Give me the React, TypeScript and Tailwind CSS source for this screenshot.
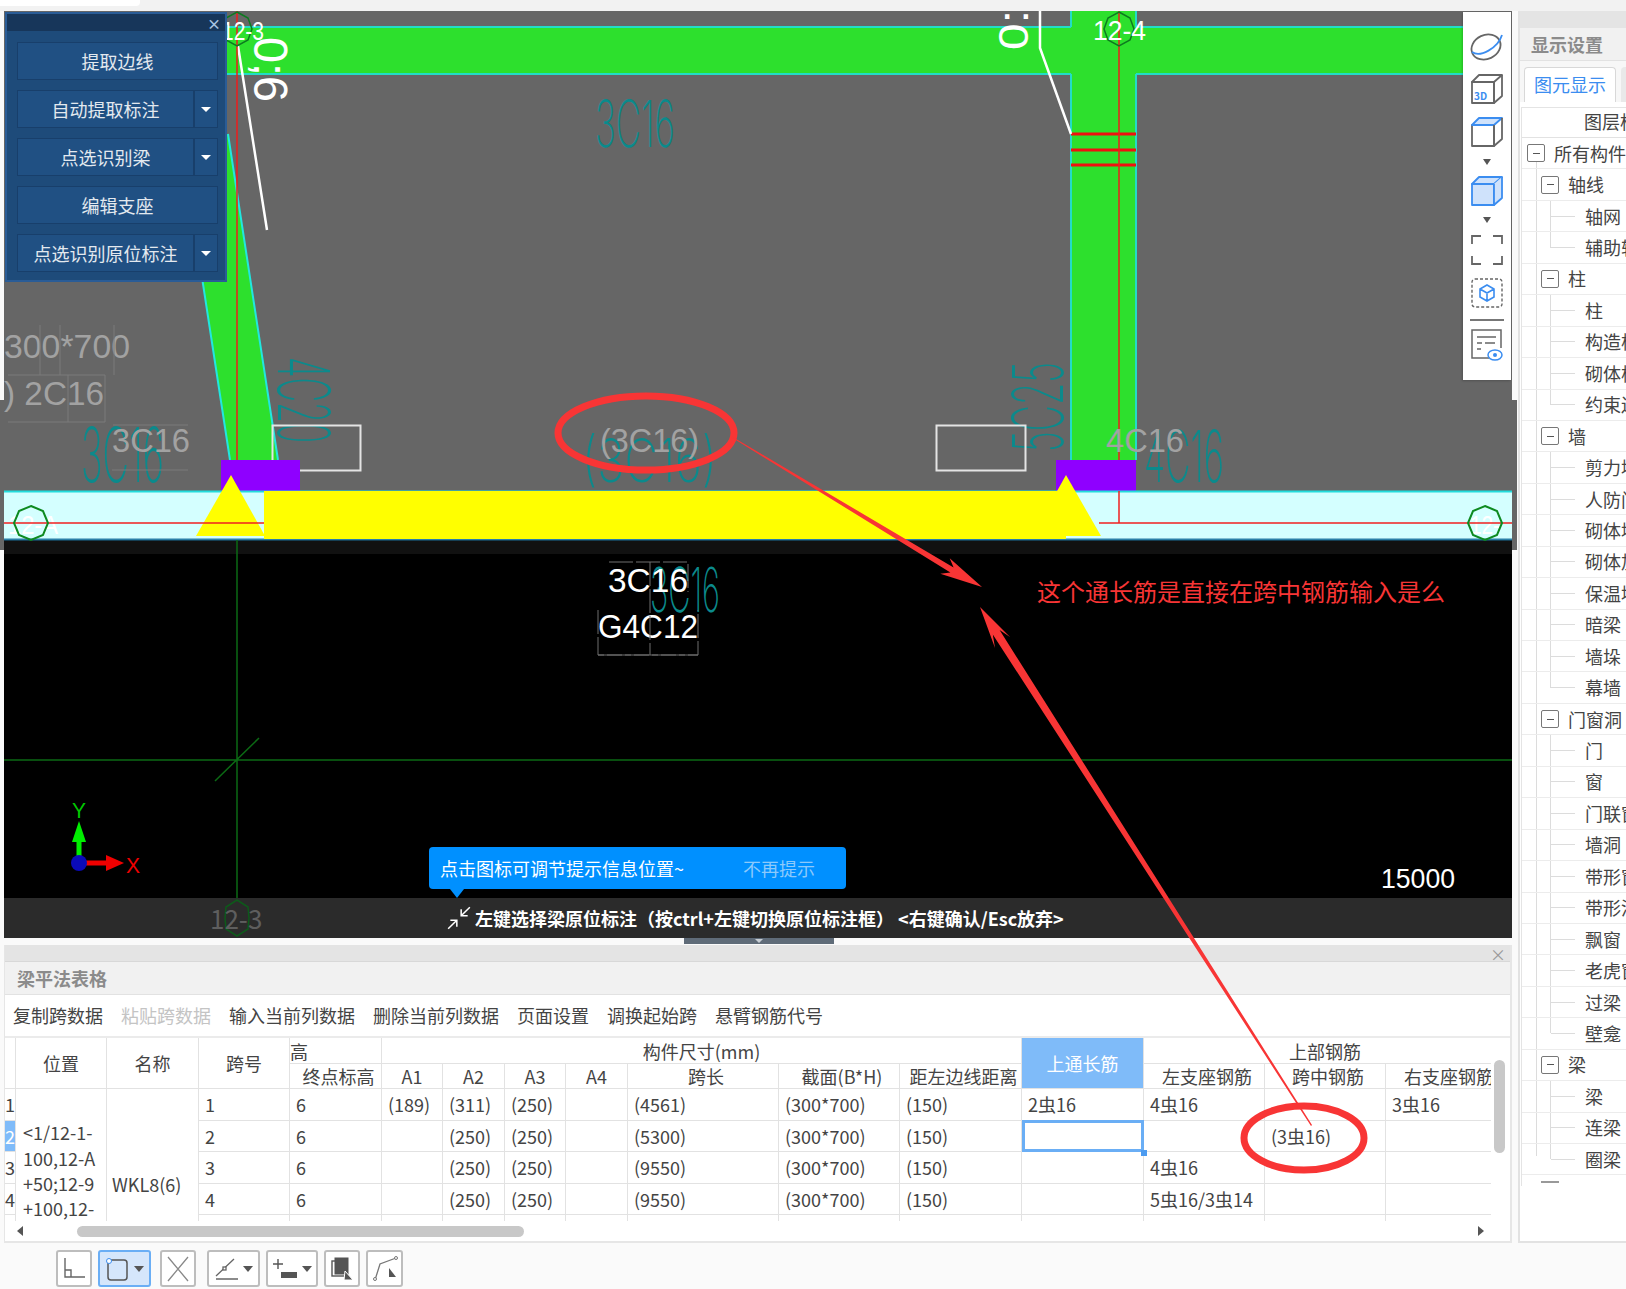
import React from "react";

const sideButtons = [
  { label: "提取边线", menu: false },
  { label: "自动提取标注", menu: true },
  { label: "点选识别梁", menu: true },
  { label: "编辑支座", menu: false },
  { label: "点选识别原位标注", menu: true },
];

const tools = ["复制跨数据", "粘贴跨数据", "输入当前列数据", "删除当前列数据", "页面设置", "调换起始跨", "悬臂钢筋代号"];

const spans = [
  ["1", "6", "(189)", "(311)", "(250)", "", "(4561)", "(300*700)", "(150)", "2虫16", "4虫16", "", "3虫16"],
  ["2", "6", "", "(250)", "(250)", "", "(5300)", "(300*700)", "(150)", "", "", "(3虫16)", ""],
  ["3", "6", "", "(250)", "(250)", "", "(9550)", "(300*700)", "(150)", "", "4虫16", "", ""],
  ["4", "6", "", "(250)", "(250)", "", "(9550)", "(300*700)", "(150)", "", "5虫16/3虫14", "", ""],
  ["", "", "", "", "", "", "", "", "", "", "″", "″", ""],
];

const tree: [number, string][] = [
  [0, "所有构件"], [1, "轴线"], [2, "轴网"], [2, "辅助轴线"], [1, "柱"], [2, "柱"], [2, "构造柱"], [2, "砌体柱"],
  [2, "约束边缘"], [1, "墙"], [2, "剪力墙"], [2, "人防门框"], [2, "砌体墙"], [2, "砌体加筋"], [2, "保温墙"], [2, "暗梁"],
  [2, "墙垛"], [2, "幕墙"], [1, "门窗洞"], [2, "门"], [2, "窗"], [2, "门联窗"], [2, "墙洞"], [2, "带形窗"], [2, "带形洞"],
  [2, "飘窗"], [2, "老虎窗"], [2, "过梁"], [2, "壁龛"], [1, "梁"], [2, "梁"], [2, "连梁"], [2, "圈梁"],
];

const Caret = () => <div className="h-0 w-0 border-x-[5px] border-t-[6px] border-x-transparent border-t-[#555]" />;

const Thin = ({ x, y, size, len, fill = "#0b8a8c", children }: any) => (
  <text x={x} y={y} fontSize={size} textLength={len} lengthAdjust="spacingAndGlyphs" fill={fill} fontWeight={200} fontFamily="Inter, sans-serif">
    {children}
  </text>
);

const Label = ({ x, y, size, len, fill = "#a2a2a2", children }: any) => (
  <text x={x} y={y} fontSize={size} textLength={len} lengthAdjust="spacingAndGlyphs" fill={fill} fontFamily="Liberation Sans, sans-serif">
    {children}
  </text>
);

const Drawing = () => (
  <svg className="block" width="1508" height="887" viewBox="4 11 1508 887">
    <rect x="4" y="11" width="1508" height="528" fill="#666666" />
    <rect x="4" y="539" width="1508" height="359" fill="#000000" />
    <rect x="4" y="541" width="1508" height="13" fill="#111111" />

    {/* beams and columns */}
    <rect x="220" y="27" width="1245" height="47" fill="#2de02d" />
    <path d="M220 27H1071M1136 27H1465M220 74H1071M1136 74H1465" stroke="#22dcc8" strokeWidth="2" />
    <rect x="1071" y="11" width="65" height="450" fill="#2de02d" />
    <path d="M1071 11V27M1136 11V27M1071 74V460M1136 74V460" stroke="#22dcc8" strokeWidth="2" />
    <polygon points="180,134 228,134 278,460 230,460" fill="#2de02d" />
    <path d="M180 134L230 460M228 134L278 460" stroke="#22e6e0" strokeWidth="2" />
    <path d="M1071 134H1136M1071 150H1136M1071 165H1136" stroke="#f01010" strokeWidth="3" />

    <Thin x="595" y="147" size="65" len="80">3C16</Thin>
    <g transform="translate(278 357) rotate(90)"><Thin x="0" y="0" size="72" len="86">4C20</Thin></g>
    <g transform="translate(1063 452) rotate(-90)"><Thin x="0" y="0" size="70" len="90">5C25</Thin></g>
    <Thin x="81" y="482" size="76" len="83">3C16</Thin>
    <Thin x="582" y="482" size="60" len="135">(3C16)</Thin>
    <Thin x="1144" y="482" size="72" len="80">4C16</Thin>

    <g transform="translate(254 37) rotate(90)"><Label x="0" y="0" size="48" len="65" fill="#ffffff">0;6</Label></g>
    <g transform="translate(1028 50) rotate(-90)"><Label x="0" y="0" size="42" len="40" fill="#ffffff">0:</Label></g>
    <path d="M238 46L267 230M1040 11V48L1071 134" stroke="#ffffff" strokeWidth="2.5" fill="none" />

    <path d="M237 11V460M1119 11V460M1119 491V523" stroke="#ee1c1c" strokeWidth="1.5" />

    <Label x="4" y="358" size="34" len="126">300*700</Label>
    <Label x="4" y="405" size="34" len="100">) 2C16</Label>
    <Label x="112" y="452" size="34" len="78">3C16</Label>
    <Label x="600" y="452" size="34" len="99">(3C16)</Label>
    <Label x="1106" y="452" size="34" len="78">4C16</Label>
    <path d="M40 325V375M60 325V375M114 325V375M8 375H105V422H8M68 375V422M113 425H188M112 470H188" stroke="#7a7a7a" strokeWidth="1" fill="none" />

    <rect x="272.5" y="425.5" width="88" height="45" fill="none" stroke="#e4e4e4" strokeWidth="2" />
    <rect x="936.5" y="425.5" width="89" height="45" fill="none" stroke="#e4e4e4" strokeWidth="2" />

    {/* beam being edited */}
    <rect x="221" y="460" width="79" height="31" fill="#8f00ff" />
    <rect x="1056" y="460" width="80" height="31" fill="#8f00ff" />
    <rect x="4" y="491" width="1508" height="48" fill="#d4ffff" />
    <path d="M4 491.5H1512" stroke="#22dcdc" strokeWidth="2" />
    <path d="M4 539.5H1512" stroke="#2a7fa8" strokeWidth="2" />
    <Label x="8" y="534" size="26" len="50" fill="#ffffff">12-A</Label>
    <Label x="1470" y="534" size="26" len="30" fill="#ffffff">12-</Label>
    <rect x="264" y="491" width="802" height="48" fill="#ffff00" />
    <polygon points="231,475 196,536 265,536" fill="#ffff00" />
    <polygon points="1066,475 1032,536 1101,536" fill="#ffff00" />
    <path d="M4 523H264M1099 523H1512M1119 491V523" stroke="#f02020" strokeWidth="1.5" />

    <polygon points="31,506 43,511 48,523 43,535 31,540 19,535 14,523 19,511" fill="none" stroke="#0e8a20" strokeWidth="2" />
    <polygon points="1485,506 1497,511 1502,523 1497,535 1485,540 1473,535 1468,523 1473,511" fill="none" stroke="#0e8a20" strokeWidth="2" />
    <polygon points="1119,12 1130,18 1134,29 1130,40 1119,46 1108,40 1104,29 1108,18" fill="none" stroke="#0d7a20" strokeWidth="1.5" />
    <polygon points="237,12 248,18 252,29 248,40 237,46 226,40 222,29 226,18" fill="none" stroke="#0d7a20" strokeWidth="1.5" />
    <Label x="1093" y="40" size="28" len="53" fill="#ffffff">12-4</Label>
    <Label x="222" y="40" size="26" len="42" fill="#ffffff">12-3</Label>

    {/* black area */}
    <path d="M237 540V898M4 760H1512M215 781L259 738" stroke="#0b6a14" strokeWidth="1.5" />
    <Thin x="650" y="612" size="62" len="70">3C16</Thin>
    <Label x="608" y="592" size="34" len="80" fill="#ffffff">3C16</Label>
    <Label x="598" y="638" size="34" len="100" fill="#ffffff">G4C12</Label>
    <path d="M609 562H688V592M650 562V655M598 610V655H698V610M598 655H698" stroke="#6e6e6e" strokeWidth="1" fill="none" strokeDasharray="24 3" />
    <Label x="1381" y="888" size="28" len="74" fill="#ffffff">15000</Label>

    {/* coordinate axes */}
    <path d="M79 862V840" stroke="#00ee00" strokeWidth="5" />
    <polygon points="79,821 72,842 86,842" fill="#00ee00" />
    <path d="M80 863H108" stroke="#f00000" strokeWidth="5" />
    <polygon points="124,863 106,855 106,871" fill="#f00000" />
    <ellipse cx="79" cy="863" rx="8" ry="8" fill="#0a0ab8" />
    <Label x="72" y="818" size="22" len="14" fill="#00c800">Y</Label>
    <Label x="126" y="873" size="22" len="14" fill="#f00000">X</Label>
  </svg>
);

const Box = ({ fill = "none", top = "#666", stroke = "#666" }: any) => (
  <svg width="32" height="30" viewBox="0 0 32 30" fill="none" strokeLinejoin="round">
    <path d="M1 8V29H23V8Z" fill={fill} stroke={stroke} strokeWidth="1.8" />
    <path d="M1 8L8 1H31L23 8Z" fill={top === "#666" ? "none" : "#cfe2fb"} stroke={top} strokeWidth="1.8" />
    <path d="M23 8V29L31 22V1" fill={fill} stroke={stroke} strokeWidth="1.8" />
  </svg>
);

const ViewBar = () => (
  <div className="absolute left-[1459px] top-[1px] flex h-[368px] w-[48px] flex-col items-center bg-white pt-[20px] shadow-[-1px_1px_2px_#0003]">
    <svg width="34" height="30" viewBox="0 0 34 30" fill="none">
      <ellipse cx="16" cy="15" rx="15" ry="12" stroke="#666" strokeWidth="1.8" transform="rotate(-25 16 15)" />
      <path d="M2 20C10 26 28 16 32 3" stroke="#3b8df0" strokeWidth="1.8" />
    </svg>
    <div className="relative mt-[12px]">
      <Box />
      <span className="absolute bottom-[2px] left-[3px] text-[10px] leading-[12px] font-bold text-[#3b8df0]">3D</span>
    </div>
    <div className="mt-[13px]"><Box top="#3b8df0" /></div>
    <div className="mt-[12px] h-0 w-0 border-x-[4px] border-t-[6px] border-x-transparent border-t-[#555]" />
    <div className="mt-[11px]"><Box fill="#cfe2fb" top="#3b8df0" stroke="#3b8df0" /></div>
    <div className="mt-[11px] h-0 w-0 border-x-[4px] border-t-[6px] border-x-transparent border-t-[#555]" />
    <svg className="mt-[12px]" width="32" height="30" viewBox="0 0 32 30" fill="none" stroke="#666" strokeWidth="1.8">
      <path d="M1 9V1H10M22 1H31V9M31 21V29H22M10 29H1V21" />
    </svg>
    <svg className="mt-[13px]" width="32" height="30" viewBox="0 0 32 30" fill="none">
      <rect x="1" y="1" width="30" height="28" rx="3" stroke="#666" strokeWidth="1.4" strokeDasharray="3 2" />
      <path d="M16 7L23 11V19L16 23L9 19V11ZM9 11L16 15L23 11M16 15V23" stroke="#3b8df0" strokeWidth="1.6" />
    </svg>
    <div className="mt-[11px] h-[2px] w-[34px] bg-[#777]" />
    <svg className="mt-[8px]" width="32" height="32" viewBox="0 0 32 32" fill="none">
      <path d="M18 29H1V1H30V19" stroke="#666" strokeWidth="1.5" />
      <path d="M6 8H25M6 14H11M14 14H24M6 20H10" stroke="#666" strokeWidth="1.4" />
      <ellipse cx="24" cy="26" rx="7" ry="5" stroke="#3b8df0" strokeWidth="1.5" />
      <circle cx="24" cy="26" r="2" fill="#3b8df0" />
    </svg>
  </div>
);

const SidePanel = () => (
  <div className="absolute left-[1px] top-[1px] h-[270px] w-[222px] border-2 border-[#2a5c96] bg-[#1e4b7a]">
    <div className="flex h-[17px] items-center justify-end bg-[#17365a] pr-[4px] text-[14px] leading-none font-bold text-[#a9c4e2]">×</div>
    <div className="flex flex-col gap-[10px] pl-[10px] pr-[7px] pt-[11px]">
      {sideButtons.map((b) => (
        <div key={b.label} className="flex h-[38px] border border-[#183f6b] bg-[#205083] text-[18px] leading-[36px] text-[#e3e9ef]">
          <div className="flex-1 text-center">{b.label}</div>
          {b.menu && (
            <div className="flex w-[24px] items-center justify-center border-l-2 border-[#183f6b]">
              <div className="h-0 w-0 border-x-[5px] border-t-[5px] border-x-transparent border-t-white" />
            </div>
          )}
        </div>
      ))}
    </div>
  </div>
);

const Canvas = () => (
  <div className="relative h-[927px] w-[1508px] overflow-hidden">
    <Drawing />
    <SidePanel />
    <ViewBar />
    <div className="absolute left-[425px] top-[836px] flex h-[42px] w-[417px] items-center rounded-[4px] bg-[#0090ff] pl-[11px] text-[18px] text-white">
      <span className="w-[303px] whitespace-nowrap">点击图标可调节提示信息位置~</span>
      <span className="text-[#8cc9fb]">不再提示</span>
      <div className="absolute left-[21px] top-[42px] h-0 w-0 border-x-[7px] border-t-[9px] border-x-transparent border-t-[#0090ff]" />
    </div>
    <div className="flex h-[40px] items-center bg-[#2b2b2b] pl-[442px] text-[18px] font-bold whitespace-nowrap text-white">
      <svg className="absolute left-[220px] top-[888px]" width="26" height="38" viewBox="0 0 26 38" fill="none" stroke="#0d5a1a" strokeWidth="1.5">
        <polygon points="13,1 24,8 25,19 24,30 13,37 2,30 1,19 2,8" />
      </svg>
      <div className="absolute left-[206px] top-[887px] text-[26px] font-normal text-[#5e5e5e]">12-3</div>
      <svg width="26" height="26" viewBox="0 0 24 24" fill="none" stroke="#ffffff" strokeWidth="1.4">
        <path d="M22 2L14 10M14 4V10H20M2 22L10 14M4 14H10V20" />
      </svg>
      <span className="ml-[3px]">左键选择梁原位标注（按ctrl+左键切换原位标注框） &lt;右键确认/Esc放弃&gt;</span>
    </div>
  </div>
);

const Cell = ({ className = "", children }: any) => (
  <div className={`flex items-center overflow-hidden whitespace-nowrap border-r border-b border-[#e2e2e2] ${className}`}>{children}</div>
);

const BeamTable = () => (
  <div className="relative h-[183px] w-[1486px] overflow-hidden text-[18px] leading-none text-[#444]">
    <div className="grid grid-cols-[11px_91px_92px_91px_92px_61px_62px_61px_62px_151px_121px_122px_122px_121px_121px_121px] grid-rows-[26px_25px_31.5px_31.5px_31.5px_31.5px_31px]">
      <Cell className="row-span-2" />
      <Cell className="row-span-2 justify-center">位置</Cell>
      <Cell className="row-span-2 justify-center">名称</Cell>
      <Cell className="row-span-2 justify-center">跨号</Cell>
      <Cell>高</Cell>
      <Cell className="col-span-7 justify-center">构件尺寸(mm)</Cell>
      <Cell className="row-span-2 justify-center bg-[#7fbbf9] text-white">上通长筋</Cell>
      <Cell className="col-span-3 justify-center">上部钢筋</Cell>
      {["终点标高", "A1", "A2", "A3", "A4", "跨长", "截面(B*H)", "距左边线距离", "左支座钢筋", "跨中钢筋", "右支座钢筋"].map((h) => (
        <Cell key={h} className={h.startsWith("A") ? "justify-center" : "justify-center pl-[6px]"}>{h}</Cell>
      ))}
      {spans.map((row, i) => (
        <React.Fragment key={i}>
          <Cell className={i === 1 ? "bg-[#7fbbf9] text-white" : ""}>{i < 4 ? i + 1 : ""}</Cell>
          {i === 0 && (
            <>
              <Cell className="row-span-5 pl-[7px] pt-[8px] leading-[25.3px] whitespace-normal">
                <div>&lt;1/12-1-<br />100,12-A<br />+50;12-9<br />+100,12-</div>
              </Cell>
              <Cell className="row-span-5 pl-[5px] pt-[34px]">WKL8(6)</Cell>
            </>
          )}
          {row.map((v, j) => (
            <Cell key={j} className="pl-[6px]">{v}</Cell>
          ))}
        </React.Fragment>
      ))}
    </div>
    <div className="absolute left-[1017px] top-[82px] h-[32px] w-[122px] border-[3px] border-[#6aaef5]" />
    <div className="absolute left-[1136px] top-[112px] h-[6px] w-[6px] bg-[#4c9bf0]" />
  </div>
);

const BottomPanel = () => (
  <div className="mt-[7px] h-[298px] w-[1508px] border-b-2 border-l border-r-2 border-[#e6e6e6] bg-white">
    <div className="relative h-[17px] border-b border-[#d8d8d8] bg-[#e4e4e4]">
      <span className="absolute right-[4px] top-0 text-[16px] leading-[18px] text-[#999]">×</span>
    </div>
    <div className="h-[33px] border-b border-[#e2e2e2] bg-[#f1f1f1] pl-[12px] text-[18px] leading-[32px] font-bold text-[#8b8b8b]">梁平法表格</div>
    <div className="flex h-[43px] items-center gap-[18px] border-b-2 border-[#ebebeb] pl-[8px] text-[18px] text-[#444]">
      {tools.map((t) => (
        <span key={t} className={t === "粘贴跨数据" ? "text-[#c4c4c4]" : ""}>{t}</span>
      ))}
    </div>
    <BeamTable />
    <div className="relative flex h-[20px] items-center">
      <div className="absolute left-[12px] h-0 w-0 border-y-[5px] border-r-[6px] border-y-transparent border-r-[#555]" />
      <div className="absolute left-[72px] h-[11px] w-[447px] rounded-full bg-[#c8c8c8]" />
      <div className="absolute left-[1473px] h-0 w-0 border-y-[5px] border-l-[6px] border-y-transparent border-l-[#555]" />
    </div>
    <div className="absolute left-[1494px] top-[1060px] h-[93px] w-[11px] rounded-full bg-[#c8c8c8]" />
  </div>
);

const TreeRow = ({ level, name, last }: { level: number; name: string; last: boolean }) => (
  <div className="relative flex h-[31.45px] items-center border-b border-[#ececec] text-[18px] whitespace-nowrap text-[#444]">
    {level === 2 ? (
      <>
        <div className={`absolute left-[28px] top-0 w-px bg-[#dcdcdc] ${last ? "h-1/2" : "h-full"}`} />
        <div className="ml-[29px] mr-[10px] h-px w-[24px] shrink-0 bg-[#dcdcdc]" />
      </>
    ) : (
      <div className={`relative mr-[9px] flex h-[18px] w-[18px] shrink-0 items-center justify-center rounded-[2px] border border-[#777] bg-white ${level === 1 ? "ml-[19px]" : "ml-[5px]"}`}>
        <div className="h-px w-[7px] bg-[#555]" />
      </div>
    )}
    {name}
  </div>
);

const DisplayPanel = () => (
  <div className="ml-[6px] h-[1232px] w-[108px] shrink-0 overflow-hidden border-b-2 border-l-2 border-[#e2e2e2] bg-white">
    <div className="h-[17px] bg-[#e4e4e4]" />
    <div className="h-[33px] border-b border-[#e2e2e2] bg-[#f1f1f1] pl-[11px] text-[18px] leading-[32px] font-bold whitespace-nowrap text-[#8b8b8b]">显示设置</div>
    <div className="flex h-[41px] items-end gap-[5px] bg-[#f7f7f7] pl-[4px]">
      <div className="h-[35px] w-[92px] shrink-0 rounded-t-[4px] border border-b-0 border-[#d8d8d8] bg-white text-center text-[18px] leading-[33px] text-[#3b8df0]">图元显示</div>
      <div className="h-[35px] w-[20px] shrink-0 rounded-t-[4px] bg-[#e9e9e9]" />
    </div>
    <div className="relative ml-[1px] mt-[5px] h-[1079px] w-[200px] border-l border-t border-[#e4e4e4]">
      <div className="h-[30px] border-b border-[#e2e2e2] pl-[62px] text-[18px] leading-[26px] whitespace-nowrap text-[#444]">图层构件</div>
      <div className="absolute left-[14px] top-[48px] h-[1000px] w-px bg-[#dcdcdc]" />
      {tree.map(([level, name], i) => (
        <TreeRow key={i} level={level} name={name} last={tree[i + 1]?.[0] !== 2} />
      ))}
      <div className="ml-[19px] mt-[6px] h-[2px] w-[18px] bg-[#999]" />
    </div>
  </div>
);

const ToolBtn = ({ active = false, className = "", children }: any) => (
  <div className={`flex h-[37px] items-center justify-center gap-[5px] rounded-[3px] border-2 ${active ? "border-[#6aaef5] bg-[#d5e6fb]" : "border-[#bdbdbd] bg-white"} ${className}`}>{children}</div>
);

const BottomTools = () => (
  <div className="flex h-[46px] items-start bg-[#fafafa] pl-[52px] pt-[7px]">
    <ToolBtn className="w-[36px]">
      <svg width="24" height="24" viewBox="0 0 24 24" fill="none" stroke="#666" strokeWidth="1.4"><path d="M3 1V20H23M3 13H9V20" /></svg>
    </ToolBtn>
    <ToolBtn active className="ml-[6px] w-[53px]">
      <svg width="24" height="26" viewBox="0 0 24 26" fill="none"><rect x="3" y="4" width="19" height="20" rx="3" stroke="#555" strokeWidth="1.5" /><circle cx="4" cy="5" r="2.5" fill="#fff" stroke="#3b8df0" /></svg>
      <Caret />
    </ToolBtn>
    <ToolBtn className="ml-[9px] w-[36px]">
      <svg width="24" height="26" viewBox="0 0 24 26" fill="none" stroke="#888" strokeWidth="1.3"><path d="M2 1L22 25M22 1L2 25" /></svg>
    </ToolBtn>
    <ToolBtn className="ml-[11px] w-[53px]">
      <svg width="24" height="24" viewBox="0 0 24 24" fill="none" stroke="#666" strokeWidth="1.3"><path d="M2 19L20 2M2 22H24" /><rect x="9" y="10" width="3" height="3" fill="#fff" /></svg>
      <Caret />
    </ToolBtn>
    <ToolBtn className="ml-[6px] w-[52px]">
      <svg width="24" height="24" viewBox="0 0 24 24" fill="none"><path d="M0 7H10M5 2V12" stroke="#555" strokeWidth="1.4" /><rect x="8" y="15" width="16" height="6" fill="#555" /></svg>
      <Caret />
    </ToolBtn>
    <ToolBtn className="ml-[6px] w-[36px]">
      <svg width="24" height="26" viewBox="0 0 24 26" fill="none"><rect x="2" y="5" width="13" height="15" stroke="#555" strokeWidth="1.4" /><rect x="5" y="2" width="13" height="16" fill="#555" stroke="#555" /><path d="M15 15L23 24H14Z" fill="#555" stroke="#fff" /></svg>
    </ToolBtn>
    <ToolBtn className="ml-[6px] w-[37px]">
      <svg width="26" height="26" viewBox="0 0 26 26" fill="none"><path d="M3 24L8 8L24 2" stroke="#777" strokeWidth="1.3" /><circle cx="24" cy="2" r="1.5" fill="#fff" stroke="#777" /><circle cx="3" cy="23" r="1.5" fill="#fff" stroke="#777" /><path d="M17 12L24 21H17Z" fill="#555" /></svg>
    </ToolBtn>
  </div>
);

const Annotations = () => (
  <svg className="pointer-events-none absolute left-0 top-0" width="1626" height="1289" viewBox="0 0 1626 1289" fill="none">
    <ellipse cx="646" cy="433" rx="88" ry="37" stroke="#f83535" strokeWidth="7" />
    <ellipse cx="1304" cy="1138" rx="60" ry="32" stroke="#f83535" strokeWidth="7" />
    <polygon points="731,436 953.6,567.4 949.7,558.3 982,587 940.3,573.7 950.4,572.6 731,437" fill="#f83535" />
    <polygon points="1312,1125 999.6,630.1 1010,637 980,607 995,648 992.8,634.5 1311,1126" fill="#f83535" />
  </svg>
);

export default function App() {
  return (
    <div className="relative h-[1289px] w-[1626px] overflow-hidden bg-[#fafafa] font-['Noto_Sans_CJK_SC','Noto_Sans',sans-serif]">
      <div className="h-[11px] bg-[#f2f2f2]">
        <div className="h-[6px] w-[140px] rounded-br-[4px] bg-white" />
      </div>
      <div className="flex">
        <div className="ml-[4px] w-[1508px] shrink-0">
          <Canvas />
          <BottomPanel />
          <BottomTools />
        </div>
        <DisplayPanel />
      </div>
      <div className="absolute left-[684px] top-[938px] flex h-[6px] w-[150px] items-center justify-center bg-[#5f6b78]">
        <div className="h-0 w-0 border-x-[4px] border-t-[4px] border-x-transparent border-t-[#c8ced4]" />
      </div>
      <div className="absolute left-0 top-[400px] h-[150px] w-[4px] bg-[#666]" />
      <div className="absolute left-[1512px] top-[400px] h-[150px] w-[5px] bg-[#666]" />
      <Annotations />
      <div className="absolute left-[1037px] top-[574px] text-[24px] leading-[34px] whitespace-nowrap text-[#f83535]">这个通长筋是直接在跨中钢筋输入是么</div>
    </div>
  );
}
